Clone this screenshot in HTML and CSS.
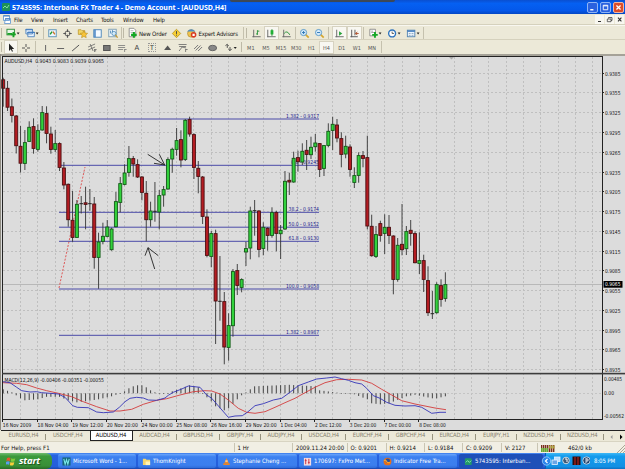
FILE: index.html
```html
<!DOCTYPE html>
<html lang="en">
<head>
<meta charset="utf-8">
<title>Interbank FX Trader 4</title>
<link rel="stylesheet" href="styles.css">
</head>
<body>
<div class="app">
  <header class="title">
    <svg class="logo" viewBox="0 0 8 8"><rect width="8" height="8" rx="1" fill="#1d8f5a"/><path d="M1 5L3 3L5 5L7 2" stroke="#7fe0a0" fill="none"/></svg>
    <span class="caption">5743595: Interbank FX Trader 4 - Demo Account - [AUDUSD,H4]</span>
    <span class="dock"></span>
    <span class="win"><svg viewBox="0 0 10 10"><path d="M2.5 7.5h3.5" stroke="#fff" stroke-width="1.6"/></svg></span>
    <span class="win"><svg viewBox="0 0 10 10"><path d="M2.5 2.5h5v5h-5zM2.5 3.2h5" stroke="#fff" fill="none"/></svg></span>
    <span class="win close"><svg viewBox="0 0 10 10"><path d="M2.7 2.7l4.6 4.6M7.3 2.7l-4.6 4.6" stroke="#fff" stroke-width="1.4"/></svg></span>
  </header>

  <nav class="menu">
    <svg viewBox="0 0 12 11"><path d="M3.5 1.5h6v5h-6zM5.500 4.500h5v5h-6z" fill="#fff" stroke="#5b93cf" stroke-width=".8"/><path d="M3.500 2h6M5 5h5" stroke="#3a78c0"/></svg>
    <span>File</span><span>View</span><span>Insert</span><span>Charts</span><span>Tools</span><span>Window</span><span>Help</span>
    <span></span>
    <svg class="mdi" viewBox="0 0 9 9"><path d="M3 6.500h3" stroke="#333"/></svg>
    <svg class="mdi" viewBox="0 0 9 9"><path d="M3.500 3.500v-1h3.500v3h-1M2.300 4h3.700v2.700h-3.700z" stroke="#444" stroke-width=".8" fill="none"/></svg>
    <svg class="mdi" viewBox="0 0 9 9"><path d="M3 2.700l3.400 3.600M6.400 2.700l-3.400 3.600" stroke="#333" stroke-width="1.100"/></svg>
  </nav>

  <div class="bar bar1">
    <i class="grip"></i>
    <svg viewBox="0 0 18 15"><rect x="2.500" y="3.500" width="8" height="6" fill="#e8f6e8" stroke="#2f8d3a"/><path d="M7 9h5M9.500 6.500v5.500M3 8.500h5" stroke="#17a325" stroke-width="2"/><path d="M13 7h3l-1.500 2z" fill="#222"/></svg>
    <svg viewBox="0 0 20 15"><path d="M3.500 3.500h7v5h-7zM5.500 6.500h7v5h-7z" fill="#e9f3ff" stroke="#5285bd"/><path d="M3 4h8M5 7h8" stroke="#3c78bd"/><path d="M14 7h3l-1.500 2z" fill="#222"/></svg>
    <i class="sep"></i>
    <svg viewBox="0 0 15 15"><rect x="3.500" y="4" width="8" height="7.500" fill="#eef6ff" stroke="#5b93b8"/><path d="M5 9l2-3" stroke="#1a9a30" stroke-width="1.500"/><path d="M8 6l2 3" stroke="#c87428" stroke-width="1.500"/></svg>
    <svg viewBox="0 0 15 15"><circle cx="7.500" cy="8" r="2.700" fill="none" stroke="#555"/><path d="M7.500 3.500v3M7.500 9.500v3M3 8h3M9 8h3" stroke="#555" stroke-width="1.200"/></svg>
    <svg viewBox="0 0 15 15"><path d="M3 4h3l1 1h3v4h-7z" fill="#f2d564" stroke="#b38a1c" stroke-width=".7"/><path d="M9 5l1.200 2.600 2.800.2-2 2 .5 2.700-2.500-1.300-2.500 1.300.5-2.700-2-2 2.800-.2z" fill="#f8c43a" stroke="#b38a1c" stroke-width=".6"/></svg>
    <svg viewBox="0 0 15 15"><rect x="3.500" y="4" width="8" height="8" fill="#f5faff" stroke="#4b86bb"/><path d="M4.800 4v8" stroke="#3d7dc0" stroke-width="1.500"/></svg>
    <svg viewBox="0 0 15 15"><rect x="3.500" y="3.500" width="8" height="8" fill="#eff6fb" stroke="#7fa0b5"/><path d="M5.500 5v3M7.500 4.500v5" stroke="#4a86b8"/><circle cx="9" cy="8" r="2.200" fill="#d3ebfa" stroke="#4b87b7" stroke-width=".8"/><path d="M10.500 9.500l2.500 3" stroke="#c69a35" stroke-width="1.400"/></svg>
    <i class="sep"></i><i class="grip"></i>
    <svg viewBox="0 0 14 15"><path d="M4 2.500h5l2 2v7h-7z" fill="#fff" stroke="#777" stroke-width=".8"/><path d="M5.500 5h3M5.500 7h4" stroke="#999" stroke-width=".7"/><path d="M9 6.500v6M6 9.500h6" stroke="#13a824" stroke-width="2.200"/></svg>
    <span class="lbl order">New Order</span>
    <svg viewBox="0 0 15 15"><path d="M7.500 3.500l4.500 4.500-4.500 4.500-4.500-4.500z" fill="#f7cf35" stroke="#b48e1c" stroke-width=".8"/><path d="M7.500 5.500v3M7.500 9.300v1" stroke="#444"/></svg>
    <svg viewBox="0 0 14 15"><circle cx="7" cy="8" r="4" fill="#f0c44c" stroke="#a77e28" stroke-width=".6"/><path d="M2.500 6q4.500-5 9 0z" fill="#4e8dc5"/><circle cx="9.500" cy="9.500" r="3" fill="#d83a22"/><rect x="8.300" y="8.300" width="2.400" height="2.400" fill="#fff"/></svg>
    <span class="lbl expert">Expert Advisors</span>
    <i class="sep"></i><i class="grip"></i>
    <svg viewBox="0 0 15 15"><path d="M4.500 4v8M3 11.500h9" stroke="#666"/><path d="M8.500 4.500v5M7 8.500h1.500M8.500 5.500h2" stroke="#27923a"/></svg>
    <svg class="on" viewBox="0 0 15 15"><path d="M3.500 4v8M3 11.500h9" stroke="#666"/><path d="M8 3.500v7" stroke="#187d25"/><rect x="6.500" y="4.500" width="3" height="4.500" fill="#20ae35"/></svg>
    <svg viewBox="0 0 15 15"><path d="M4.500 4v8M3 11.500h9" stroke="#666"/><path d="M5 8q3-4 6 1.500" fill="none" stroke="#27923a"/></svg>
    <i class="sep"></i>
    <svg viewBox="0 0 15 15"><path d="M8.500 9l3.500 3.500" stroke="#d6a72e" stroke-width="1.800"/><circle cx="6.500" cy="7" r="3.300" fill="#d7edfb" stroke="#5797c9"/><path d="M4.800 7h3.400M6.500 5.300v3.400" stroke="#2c74b5"/></svg>
    <svg viewBox="0 0 15 15"><path d="M8.500 9l3.500 3.500" stroke="#d6a72e" stroke-width="1.800"/><circle cx="6.500" cy="7" r="3.300" fill="#d7edfb" stroke="#5797c9"/><path d="M4.800 7h3.400" stroke="#2c74b5"/></svg>
    <i class="sep"></i>
    <svg class="on" viewBox="0 0 15 15"><path d="M4.500 4v8M3 11.500h9" stroke="#666"/><path d="M7 5.500l3.500 2.500-3.500 2.500z" fill="#27a33a"/></svg>
    <svg class="on" viewBox="0 0 15 15"><path d="M4.500 4v8M3 11.500h8M8 4v6" stroke="#555"/><path d="M12 8h-3M10.500 6.500l-2 1.500 2 1.500" stroke="#ae4d28" fill="none"/></svg>
    <i class="sep"></i>
    <svg viewBox="0 0 19 15"><path d="M4.500 3.500h6v7h-6z" fill="#fff" stroke="#777" stroke-width=".8"/><path d="M6 5.500h2M6 7h3" stroke="#777" stroke-width=".7"/><path d="M10 6.500v6M7 9.500h6" stroke="#13a824" stroke-width="2"/><path d="M14 7h3l-1.500 2z" fill="#222"/></svg>
    <svg viewBox="0 0 19 15"><circle cx="8" cy="8" r="3.700" fill="#fff" stroke="#2f74bd" stroke-width="1.500"/><path d="M8 6v2h2" stroke="#333" fill="none" stroke-width=".8"/><path d="M14 7h3l-1.500 2z" fill="#222"/></svg>
    <svg viewBox="0 0 19 15"><rect x="4" y="4.500" width="8" height="7" fill="#eef6ff" stroke="#5787b2"/><path d="M4 5.500h8" stroke="#3c78bd" stroke-width="1.500"/><path d="M5.500 8h5M5.500 10h5" stroke="#8ba7bd" stroke-dasharray="2 1"/><path d="M14 7h3l-1.500 2z" fill="#222"/></svg>
    <i class="sep"></i>
  </div>

  <div class="bar bar2">
    <i class="grip"></i>
    <svg class="on" viewBox="0 0 14 14"><path d="M5 3.500v7.500l1.800-1.700 1.200 2.500 1-.5-1.200-2.400h2.400z" fill="#222"/></svg>
    <svg viewBox="0 0 15 14"><path d="M7.500 4v3M7.500 9v3M3.500 8h3M8.500 8h3" stroke="#555"/></svg>
    <i class="sep"></i>
    <svg viewBox="0 0 15 14"><path d="M7.500 5v6" stroke="#666"/></svg>
    <svg viewBox="0 0 15 14"><path d="M4 8.500h7" stroke="#666"/></svg>
    <svg viewBox="0 0 15 14"><path d="M4 11l7-6" stroke="#555"/></svg>
    <svg viewBox="0 0 15 14"><path d="M4 7l7-3M4 10l7-3M6 4l3 7M10.500 9v3M10.500 9.500h2M10.500 10.800h1.500" stroke="#666" stroke-width=".8"/></svg>
    <svg viewBox="0 0 15 14"><rect x="4.500" y="5.500" width="6.500" height="5" fill="#777" stroke="#555"/></svg>
    <svg viewBox="0 0 15 14"><path d="M4 5.500h7M4 7.500h7M4 9.500h5M10.500 9v3M10.500 9.500h2" stroke="#777" stroke-width=".8"/></svg>
    <b>A</b>
    <b><u>T</u></b>
    <svg viewBox="0 0 15 14"><path d="M4 10l3.500-4.500 3.500 4.500z" fill="#555"/></svg>
    <svg viewBox="0 0 15 14"><path d="M3.500 4.500h8M4 6.500h7M4 11l3-4 4 1M10.500 9v3M10.500 9.500h2" stroke="#666" stroke-width=".8" fill="none"/></svg>
    <svg viewBox="0 0 15 14"><path d="M4 9l4-4M5.500 10.500l5-5M8 11l4-4" stroke="#777"/></svg>
    <svg viewBox="0 0 15 14"><ellipse cx="7.500" cy="8" rx="4" ry="2.700" fill="#888" stroke="#666"/></svg>
    <svg viewBox="0 0 22 14"><path d="M6 5.500l2-1.500 1.500 2M8 5v3M9 9l2 2 2-2M11 7v4" stroke="#444" fill="none"/><path d="M15 7h3.400l-1.700 2.200z" fill="#222"/></svg>
    <i class="grip"></i>
    <span>M1</span><span>M5</span><span>M15</span><span>M30</span><span>H1</span><span class="on">H4</span><span>D1</span><span>W1</span><span>MN</span>
    <i class="sep"></i>
  </div>

  <main class="chart"><svg id="chart" viewBox="0 54 625 376" width="625" height="376"></svg></main>

  <div class="tabs">
    <span>EURUSD,H4</span><span>USDCHF,H4</span><span class="active">AUDUSD,H4</span><span>AUDCAD,H4</span><span>GBPUSD,H4</span><span>GBPJPY,H4</span><span>AUDJPY,H4</span><span>USDCAD,H4</span><span>EURCHF,H4</span><span>GBPCHF,H4</span><span>EURCAD,H4</span><span>EURJPY,H1</span><span>NZDUSD,H4</span><span>NZDUSD,H4</span>
    <svg viewBox="0 0 21 11"><path d="M8.500 4v4l-2-2z" fill="#999"/><path d="M16 3.500v5l2.500-2.500z" fill="#000"/></svg>
  </div>

  <div class="status">
    <span>For Help, press F1</span><span>1 Hr</span><span>2009.11.24 20:00</span><span>O: 0.9201</span><span>H: 0.9214</span><span>L: 0.9184</span><span>C: 0.9209</span><span>V: 2127</span>
    <span class="net"><svg viewBox="0 0 14 7"><path d="M0 3.500h14" stroke="#7a2d1c" stroke-width="7" stroke-dasharray="1.400 .6"/><path d="M0 5h7" stroke="#5fb52e" stroke-width="4" stroke-dasharray="1.400 .6"/><path d="M8 2h6" stroke="#a9a134" stroke-width="3" stroke-dasharray="1.400 .6"/></svg></span>
    <span class="kb">462/0 kb</span>
    <svg viewBox="0 0 10 12"><path d="M1 12l9-9M4 12l6-6M7 12l3-3" stroke="#aaa694"/></svg>
  </div>

  <footer class="task">
    <div class="start"><svg viewBox="0 0 10 10"><path d="M1 2q2-1 3.500 0l-.7 3q-2-1-3.500 0z" fill="#e8552c"/><path d="M5.300 2.300q2 1 4 0l-.8 3q-2 1-3.800 0z" fill="#7fc93c"/><path d="M.2 5.700q2-1 3.500 0l-.7 3q-1.500-1-3.500 0z" fill="#5a9df0"/><path d="M4.500 6q2 1 3.800 0l-.8 3q-2 1-3.700 0z" fill="#f9cf3a"/></svg>start</div>
    <div class="btn"><svg viewBox="0 0 10 10"><rect width="9" height="9" x=".5" y=".5" fill="#17647c"/><path d="M2 2l1.500 6L5 3l1.500 5L8 2" stroke="#79e9e8" fill="none" stroke-width="1.200"/></svg>Microsoft Word - 1...</div>
    <div class="btn"><svg viewBox="0 0 10 10"><path d="M1 2h3l1 1h4v6h-8z" fill="#f4d56c"/><rect x="4" y="5" width="5" height="4" fill="#fff4b6"/></svg>ThomKnight</div>
    <div class="btn"><svg viewBox="0 0 10 10"><path d="M5 1l2.500 6h-5z" fill="#f08b22"/><path d="M3.700 4.500h2.600" stroke="#fff"/><path d="M1.500 8h7" stroke="#ed8524" stroke-width="2"/></svg>Stephanie Cheng ...</div>
    <div class="btn"><svg viewBox="0 0 10 10"><rect x="1" y="1" width="8" height="8.500" fill="#f5dce0"/><path d="M3 2v6M6.500 2v6M2 4h2M5.500 6h2" stroke="#cb2e3e"/></svg>170697: FxPro Met...</div>
    <div class="btn"><svg viewBox="0 0 10 10"><circle cx="5" cy="5" r="4.300" fill="#e66d18"/><circle cx="5.300" cy="4.300" r="2.500" fill="#28509c"/><path d="M1 4q2-1 3 1t4 1" stroke="#f6a22d" fill="none" stroke-width="1.300"/></svg>Indicator Free Tra...</div>
    <div class="btn current"><svg viewBox="0 0 10 10"><rect x="1" y="1.500" width="7.500" height="7.500" rx="1" fill="#21996a"/><path d="M2 6l2-2 2 2 2-2" stroke="#8eeab2" fill="none"/></svg>5743595: Interban...</div>
    <div class="tray">
      <svg viewBox="0 0 50 16"><circle cx="6.500" cy="8" r="4.200" fill="#2a84ea" stroke="#9bd2ff" stroke-width=".8"/><path d="M7.500 6l-2 2 2 2" stroke="#fff" fill="none" stroke-width="1.200"/><rect x="14.500" y="4" width="5.500" height="4.500" fill="#b9ddff" stroke="#e6f3ff" stroke-width=".8"/><rect x="12" y="7" width="5.500" height="4.500" fill="#6aa5e6" stroke="#e6f3ff" stroke-width=".8"/><circle cx="26" cy="7.500" r="3.300" fill="#3e5976" stroke="#c9d6df"/><path d="M25 6h2v3" stroke="#fff" fill="none"/><rect x="32.500" y="3.500" width="8" height="8.500" fill="#2a0d10"/><path d="M35 4v8M38 4v8" stroke="#c7281e"/><circle cx="46.500" cy="7.500" r="3.700" fill="#25466f" stroke="#b5cde2"/><path d="M46 5v5M46 6h2v2h-2" stroke="#fff" fill="none" stroke-width=".8"/></svg>
      <span>8:05 PM</span>
    </div>
  </footer>
</div>
<script src="chart.js"></script>
</body>
</html>
```
FILE: styles.css
```css
* { box-sizing: border-box; }
body { margin: 0; overflow: hidden; }
.app {
  width: 625px; height: 469px; display: flex; flex-direction: column;
  background: #ece9d8; color: #111;
  font-family: "DejaVu Sans Condensed", "DejaVu Sans", sans-serif; font-size: 6px; line-height: 1; white-space: nowrap;
}
svg { display: block; }
.title {
  position: relative; height: 14px; flex: none; display: flex; align-items: center; padding: 0 1px 0 2px; gap: 1px;
  background: linear-gradient(#0a4fd0, #0560f2 25%, #0458ea 75%, #0347c4);
}
.logo { width: 8px; height: 8px; }
.caption { flex: 1; margin-left: 1px; color: #fff; font: bold 7px/1 "Noto Sans", sans-serif; letter-spacing: -.02px; }
.dock { position: absolute; left: 230px; top: 0; width: 165px; height: 2px; background: #3c4858; border-radius: 0 0 2px 2px; }
.win { width: 11px; height: 11px; border: 1px solid #8fb5f6; border-radius: 2px; background: #2b62df; margin-left: 1px; }
.win svg { width: 9px; height: 9px; }
.win.close { background: #dc4d2a; border-color: #f2b6a4; }

.menu {
  height: 11px; flex: none; display: grid; align-items: center; font-size: 6px; letter-spacing: -.1px;
  grid-template-columns: 14px 17px 22px 23px 25px 22px 30px 20px 1fr 10px 10px 10px; border-bottom: 1px solid #d5d1bd;
}
.menu svg { width: 12px; height: 11px; }
.menu .mdi { width: 9px; height: 9px; background: #f8f7f0; }

.bar { flex: none; display: grid; align-items: stretch; justify-content: start; }
.bar1 {
  height: 15px; border-bottom: 1px solid #d5d1bd; border-top: 1px solid #f8f7f0;
  grid-template-columns: 4px 18px 20px 2.5px repeat(5, 15px) 2.5px 3px 14px 30px 15px 14.500px 43.500px 3px 4px repeat(3, 15px) 3px repeat(2, 15px) 5px repeat(2, 15px) 2.500px repeat(3, 19px) 2px;
}
.bar2 {
  height: 14px;
  grid-template-columns: 4px 14px 16px 4px repeat(11, 15.200px) 15.200px 20px 3px repeat(9, 15.150px) 3px;
}
.bar svg { width: 100%; height: 14px; }
.bar > span, .bar > b { align-self: center; text-align: center; font-size: 5.500px; }
.bar > b { font: 7px/1 "Liberation Sans", sans-serif; color: #444; padding-top: 1px; }
.bar > b u { border: 1px dotted #999; text-decoration: none; padding: 0 1px; }
.bar2 > span { color: #555; line-height: 12px; padding-top: 1px; }
.bar > .lbl { text-align: left; font-size: 6px; padding-top: 1px; letter-spacing: -.1px; }
.bar > .expert { letter-spacing: -.2px; }
.on { background: #f8f7f1; box-shadow: inset 0 0 0 1px #d6d2c0; }
.sep { border-left: 1px solid #c5c1ae; margin: 1px 0 1px 1px; }
.grip { border-left: 1px solid #bdb9a6; margin: 2px 0 2px 1px; }

.chart { height: 376px; flex: none; background: #dcdcdc; }
.chart text { font-family: "DejaVu Sans Condensed", "DejaVu Sans", sans-serif; font-size: 5.500px; fill: #111; }
.chart .fib { fill: #20208c; }
.chart .inv { fill: #fff; }

.tabs {
  height: 11px; flex: none; display: grid; color: #85816f; font-size: 5.800px; line-height: 9px; text-align: center;
  border-top: 1px solid #222; margin-left: 1px; letter-spacing: -.1px;
  grid-template-columns: 45px 43.500px 43px 44px 43px 41px 41px 44.500px 42.500px 44px 43.500px 40.500px 44px 43.500px 21px;
}
.tabs span { position: relative; background: linear-gradient(#98947f, #98947f) right 3px / 1px 6px no-repeat; }
.tabs span.active { background: #fff; border: solid #222; border-width: 0 1px 1px; color: #000; }
.tabs span:nth-child(2) { background: none; }

.status {
  height: 12px; flex: none; display: grid; border-top: 1px solid #d8d4c2; background: #f1efe4;
  grid-template-columns: 234.500px 58.500px 54.500px 39px 38.500px 38px 39px 35.500px 22.500px 55px 10px;
}
.status span { padding: 3px 0 0 3px; background: linear-gradient(#c9c5b3, #c9c5b3) right 1px / 1px 9px no-repeat; }
.status span:first-child { padding-left: 1px; }
.status .net svg { width: 14px; height: 7px; }
.status .net { background: none; }
.status .kb { padding-left: 8px; background: none; }

.task {
  height: 16px; flex: none; display: grid; color: #fff;
  grid-template-columns: 57px 80px 80px 81px 80px 80px 86px 1fr;
  background: linear-gradient(#4a8cf2, #2763e0 15%, #245edb 85%, #1b47aa);
}
.start {
  width: 52px; display: flex; align-items: center; gap: 3px; padding-left: 6px; border-radius: 0 6px 6px 0;
  background: linear-gradient(#72bb72, #3c9a3c 20%, #388f38 80%, #276b27);
  font: italic bold 9.500px/1 "Open Sans", sans-serif; letter-spacing: -.2px; text-shadow: 1px 1px 1px #1c4f1c;
}
.start svg { width: 10px; height: 10px; }
.btn {
  margin: 1px 1px 1px 1px; border-radius: 2px; display: flex; align-items: center; gap: 2px; padding-left: 4px;
  background: linear-gradient(#6aa5fb, #3c81f0 20%, #3b7eee 80%, #2f6cd8); overflow: hidden;
}
.btn svg { width: 9px; height: 9px; flex: none; }
.btn.current { background: #1e50b8; padding-left: 5px; }
.tray {
  display: flex; align-items: center; border-left: 1px solid #0c5cb8;
  background: linear-gradient(#3fb8f6, #139bec 20%, #1290e4 85%, #0e6fc0);
}
.tray { margin-left: 1px; }
.tray svg { width: 50px; height: 16px; margin-left: -6px; flex: none; }
.tray span { margin-left: 4px; letter-spacing: -.1px; }
```
FILE: chart.js
```js
const X0 = 3.2, STEP = 4.335;
// high, low, body top, body bottom, colour (r: down, g: up, d: doji)
const candles = `77.7 106.7 79.5 88.5 r
81 111 88 107.5 r
98.5 122.5 106.5 115.7 r
115 153.5 115.7 146 r
126 172.5 146 163.5 r
130 170 142.3 163.7 g
121.3 142 127 141.7 g
118.3 153.7 126.3 148.7 r
124.3 151.7 130.3 149.7 g
106 130.7 112.3 130.3 g
106.3 143.3 113.3 133.7 r
126.7 153.7 133.7 149.7 r
130 152 143.3 149.7 g
142.3 171 143.3 167.7 r
162 189.3 167.7 185.3 r
183.5 226.7 184 220 r
191 241.7 220 237.7 r
200 238 204 237.7 g
196 213.5 203.7 203.7 d
186.7 229.3 202.5 204.7 r
189 210.7 203.7 203.7 d
197 268.7 203.7 257.7 r
232.7 288.7 241.7 257.7 g
222.7 244.3 236 241.7 g
220 237.3 226.7 236.7 g
227.7 250.7 228.7 250 g
192 227.3 201.3 227 g
177 212.3 183.3 202.7 g
164.3 185.3 172.7 184.7 g
146 176.7 158.3 172.7 g
156 176.7 158.3 164.3 r
159.3 178 164.3 177.3 r
176 200.3 176.7 192.7 r
181 241.3 193 220 r
201.7 226.7 210.7 220 g
182 221.7 211.3 211.3 d
190 229.3 195.3 212.3 g
186 206.7 189.3 195.3 g
157.3 189.7 159.3 189.3 g
147.7 172.7 149 159.3 g
128 155.7 140.3 149.7 g
130.3 167.3 139.3 160.3 r
119 161 120 159.7 g
116.7 136.7 119.3 134.3 r
133.3 179 134.3 167.7 r
161 193.3 168 176.7 r
176 224 176.7 216.7 r
209.3 257.3 216.7 255.7 r
231 267.3 233.3 256.7 g
229.7 344 233.3 301.3 r
256 320.7 301.3 301.3 d
292 364.3 301.3 347.3 r
313.3 360.7 325.3 347.7 g
269 336.7 271.3 326 g
264 295 270.3 285.7 r
278.3 292.3 279.3 287.7 g
242 266 248.3 252.3 g
206.7 259.3 210.7 248.3 g
200 235.7 210.7 210.7 d
210 257.3 210.7 249.7 r
222.3 255.3 227 248.7 g
227.3 250.7 228 235.7 r
207.3 237.7 212.3 235.7 g
210.7 251.3 212.3 233.7 r
225 259 230 234 g
171 230 181 229.3 g
172.7 195 180 182.3 r
151.7 182.7 158 182.3 g
150.7 171.7 157.3 162 r
143.3 165 151 162.3 g
140 170 150 154.7 r
136.7 159 147 155 g
134 151.7 142.7 147 g
143 177 143.3 169.7 r
145 176 145.3 168.7 g
123.3 147.3 131 145.7 g
116.7 150 124 130.7 g
119 142.3 124.7 138.3 r
132.3 167.3 138.3 154.7 r
135.7 158.3 146 154.3 g
144.3 176.7 146.7 169.7 r
167.3 188 175.3 182.7 g
152.3 182.7 155.3 175.7 g
151 167.3 155.3 158.7 r
135.7 229.3 157.3 226.3 r
214.7 256.7 226 256 r
226 258 234.3 256.7 g
220.7 241.7 223.3 235.7 r
214.3 254 227 233.7 g
215 244 227 235.7 r
235.3 294.3 235.7 279.7 r
238 281.7 245 279.7 g
204 255.3 244 250 r
226 255 231.3 249 g
220 245.7 230 233.7 r
231.3 263.3 233.3 263 r
232.3 274 260.3 263.7 g
254.7 292 260.3 279.7 r
266.3 316 280.3 313 r
291 319 313.7 313.7 d
282.3 313.7 284.3 313 g
279.3 306.7 285.3 299.7 r
272.3 301.7 284.3 298.7 g`.split("\n").map(l => l.split(" "));

const macd = "3,381.7 10,382.7 16.7,387.3 21.7,390.7 30,392 36.7,391.7 41.7,392.7 50,393.3 58.3,394 65,397.3 72.7,405.7 77.3,407.3 88.3,407.7 96.7,412 103.3,412.7 113.3,412 119.3,407.3 125,401.7 130,398.3 136.7,397.3 143.3,398 148.3,400 156.7,400.3 165,398 168.3,395.3 173.3,392.3 181.7,389 188.3,386 200,387.3 206.7,395 211.7,398.3 216.7,404 228.3,417.3 235,416 242.3,415.7 247.7,412 255,405.7 263.3,403.7 273.3,400 281.7,398.3 290,392.3 298.3,385.7 308.3,382 316.7,379 326.7,378 335,377 341.7,378.7 348.3,380.3 355,382.7 361.7,384 366.7,388.3 373.3,395.7 380,398.3 386.7,402.3 395,405.3 405,406 415,405.7 421.7,407.3 431.7,413.3 440,412.3 446,412.3";
const signal = "3,382.7 16.7,383.3 26.7,384.7 36.7,388 46.7,390.7 60,393.7 71.7,396.7 83.3,401.7 96.7,406.7 110,411 120,411 131.7,409.3 143.3,404.3 156.7,400.3 166.7,398.7 180,395 193.3,391.7 205,390.7 211.7,391 220,394 228.3,400 238.3,408.3 246.7,412.3 255,413.3 265,411.7 275,407.3 285,402.7 295,398.3 305,392.7 315,387.3 325,382.7 336.7,379.7 348.3,379.3 361.7,380 371.7,383.3 381.7,389.3 391.7,395 401.7,400.7 415,404 425,406 435,408 446,409.7";
const knots = [[0,-4],[2,-1],[3,2],[4,5],[5,7],[8,6],[10,3.5],[13,3.5],[15,7],[17,9],[19,8],[22,6],[25,3],[27,0],[28,-2],[29,-5],[30,-7],[31,-8],[32,-8],[33,-6],[34,-3],[35,-1],[38,0],[39,-2],[41,-5],[43,-8],[45,-6],[46,0],[47,4],[48,8],[49,13],[51,17],[52,15],[54,6],[55,2],[56,-1],[57,-4],[58,-7],[66,-8.5],[72,-7],[73,-3],[77,-.7],[80,0],[81,1],[84,6],[85,10],[87,11],[89,10],[93,3],[95,1.5],[99,5],[100,5],[102,3]];

let out = "";
const line = (x1, y1, x2, y2, c, w = 1, extra = "") =>
  out += `<line x1="${x1}" y1="${y1}" x2="${x2}" y2="${y2}" stroke="${c}" stroke-width="${w}" ${extra}/>`;
const rect = (x, y, w, h, c) => out += `<rect x="${x}" y="${y}" width="${w}" height="${h}" fill="${c}"/>`;
const text = (x, y, w, s, cls = "") =>
  out += `<text x="${x}" y="${y}" textLength="${w}" lengthAdjust="spacingAndGlyphs" class="${cls}">${s}</text>`;

// window frame
rect(0, 54, 625, 2, "#a5a298");
rect(0, 54, 1, 376, "#8d8a80");

// grid
for (let k = 1; k <= 34; k++) {
  const x = Math.floor(X0 + k * STEP * 4) + .5;
  line(x, 57, x, 419, "#bfbfbf", 1, 'stroke-dasharray="2 2"');
}
for (let k = 0; k < 16; k++) {
  const y = Math.floor(73.2 + k * 19.77) + .5;
  line(3, y, 602, y, "#bfbfbf", 1, 'stroke-dasharray="2 2"');
  line(602, y, 604, y, "#222");
  text(605, y + 2, 15.5, (0.9385 - k * 0.003).toFixed(4));
}
line(3, 393.5, 602, 393.5, "#c4c4c4", 1, 'stroke-dasharray="2 2"');
line(3, 284.5, 602, 284.5, "#b8b8b8");

// trend leg under the candles
line(59, 288, 85, 167, "#dc4848", .9, 'stroke-dasharray="2 1.5"');

// retracement levels
const fibs = [[119, "1.382 - 0.9317", 33], [165.3, "0.0 - 0.9245", 28], [212.3, "38.2 - 0.9174", 30.5], [227.2, "50.0 - 0.9152", 30.5],
  [241.3, "61.8 - 0.9130", 30.5], [289, "100.0 - 0.9058", 33], [335.3, "1.382 - 0.8987", 33]];
for (const [y, s, w] of fibs) {
  line(59, y, 319, y, "#4a4aa8");
  text(319 - w, y - 1, w, s, "fib");
}

// candles
candles.forEach(([h, l, t, b, c], i) => {
  const x = X0 + i * STEP;
  line(x, h, x, l, "#333", .9);
  if (c === "d") line(x - 1.8, t, x + 1.8, t, "#222");
  else {
    const up = c === "g";
    out += `<rect x="${x - 1.5}" y="${+t + .3}" width="3" height="${Math.max(1, b - t - .6)}" fill="${up ? "#32d23c" : "#b41c22"}" stroke="${up ? "#145a18" : "#4c1012"}" stroke-width=".9"/>`;
  }
});

// hand-drawn arrows
out += '<path d="M147.7 154.3L164.7 165M159.3 154.3L164.7 165L154 163.300M154.700 269L148 247.700M145 255.700L148 247.700L158.300 255.700" fill="none" stroke="#222" stroke-width=".9"/>';
out += '<path d="M449 57h5l-2.500 2.500z" fill="#aaa"/>';

// oscillator
for (let i = 0; i <= 102; i++) {
  const n = Math.max(1, knots.findIndex(k => k[0] >= i));
  const [a, b] = [knots[n - 1], knots[n]];
  const v = a[1] + (b[1] - a[1]) * (i - a[0]) / (b[0] - a[0]);
  const x = X0 + i * STEP;
  line(x, 393.3, x, 393.3 + (Math.abs(v) < .7 ? .7 : v), "#333", .9);
}
out += `<polyline points="${signal}" fill="none" stroke="#d23c3c" stroke-width=".9"/>`;
out += `<polyline points="${macd}" fill="none" stroke="#3434b8" stroke-width=".9"/>`;

// pane borders
line(2, 56.5, 603, 56.5, "#222");
line(2.5, 56, 2.5, 420, "#222");
line(602.5, 56, 602.5, 420, "#222");
rect(2, 372.8, 623, 1.6, "#3c3c3c");
line(2, 419.500, 603, 419.500, "#222");

// captions
text(4.5, 63.3, 99.5, "AUDUSD,H4&#160; 0.9043 0.9083 0.9039 0.9065");
text(4.5, 382.3, 99.5, "MACD(12,26,9) -0.00406 -0.00351 -0.00055");
text(604, 380.7, 18, "0.00485");
text(604, 395.3, 10, "0.00");
text(604, 418, 20, "-0.00562");
rect(603.5, 281, 19, 6.700, "#000");
text(605, 286.3, 15.5, "0.9065", "inv");

["16 Nov 2009", "18 Nov 04:00", "19 Nov 12:00", "20 Nov 20:00", "24 Nov 00:00", "25 Nov 08:00", "26 Nov 16:00",
 "29 Nov 20:00", "1 Dec 04:00", "2 Dec 12:00", "3 Dec 20:00", "7 Dec 00:00", "8 Dec 08:00"].forEach((s, i) => {
  const x = 2.5 + i * 34.7;
  line(Math.floor(x) + .5, 419, Math.floor(x) + .5, 422, "#222");
  text(x + .3, 427, i === 0 ? 28.5 : s.length > 11 ? 31 : 26.500, s);
});
document.getElementById("chart").innerHTML = out;
```
